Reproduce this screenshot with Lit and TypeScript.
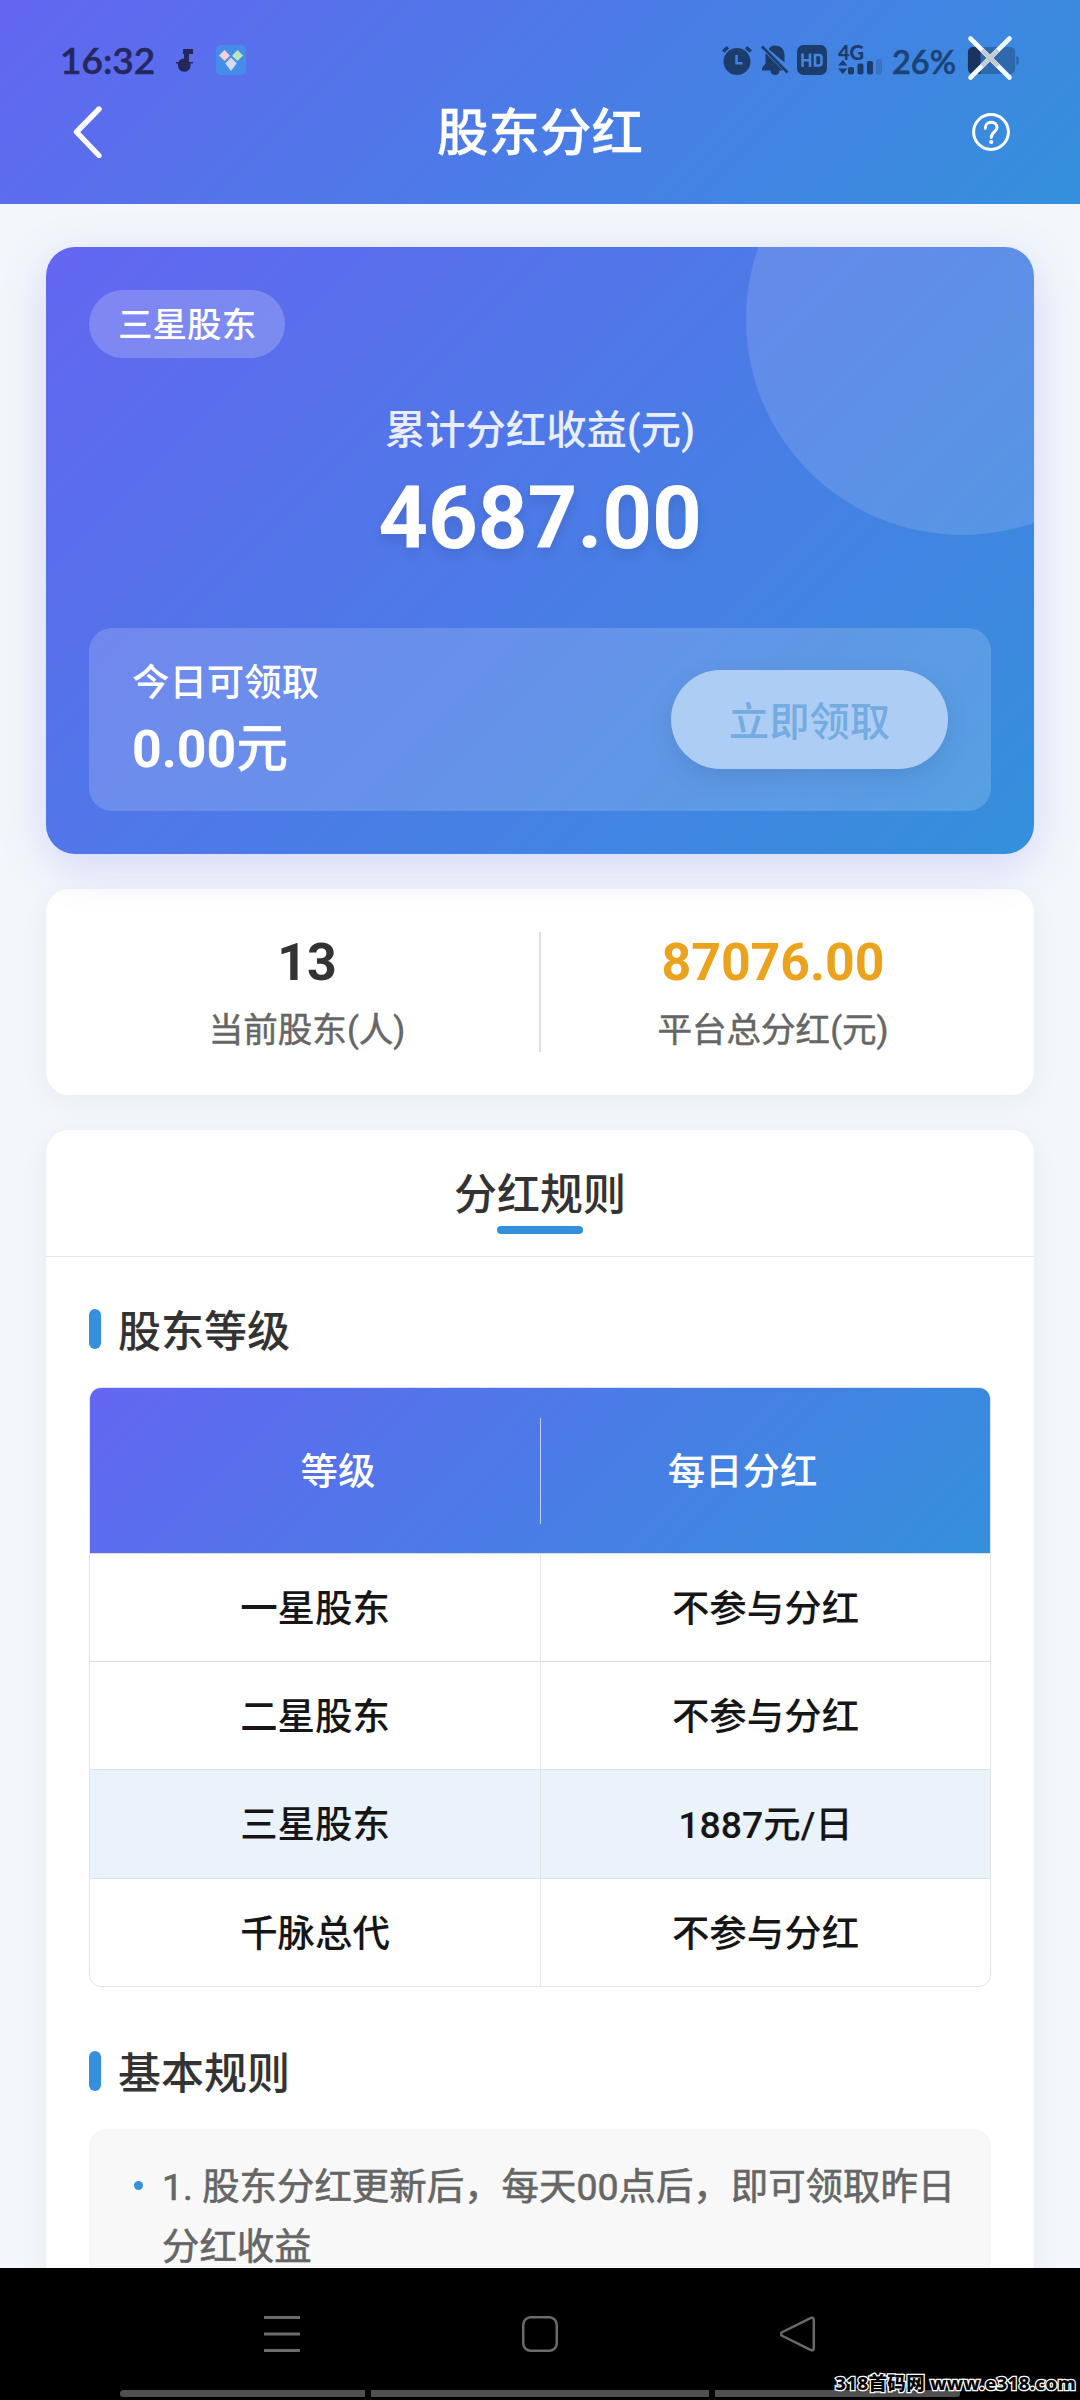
import { LitElement, html, css, svg } from "lit";
import { customElement } from "lit/decorators.js";
import { classMap } from "lit/directives/class-map.js";

const LEVELS = [
  { name: "一星股东", daily: "不参与分红", active: false },
  { name: "二星股东", daily: "不参与分红", active: false },
  { name: "三星股东", daily: "1887元/日", active: true },
  { name: "千脉总代", daily: "不参与分红", active: false },
];

const SIGNAL_BARS = [
  { x: 10, y: 22, h: 7, o: 1 },
  { x: 19.5, y: 18.5, h: 10.5, o: 1 },
  { x: 29, y: 16, h: 13, o: 1 },
  { x: 38, y: 14, h: 15, o: 0.25 },
];

@customElement("status-bar")
class StatusBar extends LitElement {
  static styles = css`
    :host {
      display: flex;
      align-items: center;
      height: 76px;
      padding: 44px 60px 0 60px;
      font-family: Lato, "Noto Sans CJK SC", sans-serif;
      color: #24285f;
    }
    svg {
      display: block;
      flex: none;
      overflow: visible;
    }
    .time {
      width: 116px;
      font-size: 37px;
      line-height: 32px;
      font-weight: 600;
      -webkit-text-stroke: 0.5px #24285f;
      white-space: nowrap;
    }
    .app {
      margin-left: 22px;
    }
    .right {
      display: flex;
      align-items: center;
      margin-left: auto;
      color: #1c3c6c;
    }
    .bell {
      margin-left: 9px;
    }
    .hd {
      margin-left: 8px;
    }
    .network {
      margin-left: 11px;
      width: 45px;
      height: 30px;
      position: relative;
    }
    .gen {
      position: absolute;
      left: 0;
      top: -1px;
      font-size: 20px;
      line-height: 17px;
      font-weight: 900;
    }
    .percent {
      margin: 4px 0 0 9px;
      width: 75px;
      font-size: 32.5px;
      line-height: 34px;
      font-weight: 600;
      -webkit-text-stroke: 0.5px #1c4378;
      color: #1c4378;
    }
    .battery {
      position: relative;
    }
    .close {
      position: absolute;
      left: 1px;
      top: -11px;
    }
  `;

  render() {
    return html`
      <span class="time">16:32</span>
      <svg width="18" height="22" viewBox="0 0 18 22">
        <path d="M7 0H17V5H13V13H17V14.5H14.5A6.5 6.5 0 1 1 2 14.5H0V13H2.4A6.5 6.5 0 0 1 8 9.5V5H7Z" fill="#25265c" />
      </svg>
      <svg class="app" width="30" height="30" viewBox="0 0 30 30">
        <rect width="30" height="30" rx="5" fill="#468de9" />
        <path d="M8.5 5L14 10.8L8.6 16L3 10.6Z" fill="#f5cfd5" />
        <path d="M21.5 5L27 10.6L21.4 16L16 10.8Z" fill="#b8e8b5" />
        <path d="M15 12.5L20.8 18.3L15 26L9.2 18.3Z" fill="#d4daf8" />
      </svg>
      <div class="right">
        <svg width="30" height="30" viewBox="0 0 30 30">
          <circle cx="15" cy="16.5" r="13.5" fill="currentColor" />
          <path d="M1.2 6.5L6 2.3M28.8 6.5L24 2.3" stroke="currentColor" stroke-width="3.4" />
          <path d="M14.5 10V18.3H20.5" fill="none" stroke="#4381e3" stroke-width="2.6" />
        </svg>
        <svg class="bell" width="28" height="30" viewBox="0 0 28 30">
          <path d="M7.5 4.5C9 2 11 .5 14 .5C20 .5 23.5 4.5 23.5 10V17.5L7.5 4Z" fill="currentColor" />
          <path d="M4.5 8L22 25.5H18.5C18.5 28.5 16.5 30 14 30C11.5 30 9.5 28.5 9.5 25.5H1V23L4.5 18.5Z" fill="currentColor" />
          <path d="M1 1.5L26.5 27.5" stroke="currentColor" stroke-width="2.6" />
        </svg>
        <svg class="hd" width="30" height="30" viewBox="0 0 30 30">
          <rect width="30" height="30" rx="6.5" fill="currentColor" />
          <path d="M5.5 8.5V22M13 8.5V22M5.5 15.2H13M18 10H22Q24.5 10 24.5 12.5V18Q24.5 20.5 22 20.5H18Z" fill="none" stroke="#4385df" stroke-width="2.6" />
        </svg>
        <div class="network">
          <span class="gen">4G</span>
          <svg width="45" height="30" viewBox="0 0 45 30">
            <path d="M4.8 15L9.5 20.5H0ZM0 23.5H9.5L4.8 29Z" fill="currentColor" />
            ${SIGNAL_BARS.map(
              (b) => svg`<rect x=${b.x} y=${b.y} width="6" height=${b.h + 0.5} rx="2" fill="currentColor" opacity=${b.o} />`
            )}
          </svg>
        </div>
        <span class="percent">26%</span>
        <div class="battery">
          <svg width="53" height="27" viewBox="0 0 53 28">
            <path d="M6 0H43Q49 0 49 6V22Q49 28 43 28H6Q0 28 0 22V6Q0 0 6 0ZM50 9.5Q53 9.5 53 14Q53 18.5 50 18.5Z" fill="#2f69ad" />
            <path d="M6 0H13V28H6Q0 28 0 22V6Q0 0 6 0Z" fill="#19345e" />
          </svg>
          <svg class="close" width="44" height="44" viewBox="0 0 44 44">
            <path d="M2.5 2.5L41.5 41.5M41.5 2.5L2.5 41.5" stroke="#f4faff" stroke-width="4.6" stroke-linecap="round" />
            <path d="M14 14L30 30M30 14L14 30" stroke="#c6cbd3" stroke-width="4.4" />
          </svg>
        </div>
      </div>
    `;
  }
}

@customElement("app-root")
class AppRoot extends LitElement {
  static styles = css`
    :host {
      display: flex;
      flex-direction: column;
      width: 1080px;
      height: 2400px;
      overflow: hidden;
      position: relative;
      background: #f3f7fb;
      font-family: Roboto, "Noto Sans CJK SC", sans-serif;
      color: #333;
      --brand: linear-gradient(135deg, #6366f1, #3490dc);
      --accent: #3490dc;
    }
    * {
      box-sizing: border-box;
    }
    svg {
      display: block;
    }
    .header {
      flex: none;
      height: 204px;
      background: var(--brand);
    }
    .titlebar {
      display: grid;
      grid-template-columns: 70px 1fr 70px;
      align-items: center;
      height: 112px;
      padding: 0 54px;
      color: #fff;
    }
    .title {
      padding-top: 4px;
      text-align: center;
      font-size: 51.5px;
      line-height: 60px;
      font-weight: 500;
      -webkit-text-stroke: 0.3px #fff;
    }
    .back {
      margin-left: 19px;
    }
    .help {
      margin-left: 16px;
    }
    .content {
      flex: 1;
      min-height: 0;
      overflow: hidden;
      padding: 43px 46px 0;
      display: flex;
      flex-direction: column;
      gap: 35px;
    }
    .hero {
      flex: none;
      height: 607px;
      padding: 43px;
      border-radius: 29px;
      background: var(--brand);
      box-shadow: 0 12px 46px rgba(99, 102, 241, 0.22);
      color: #fff;
      position: relative;
      display: flex;
      flex-direction: column;
    }
    .clip {
      position: absolute;
      inset: 0;
      border-radius: 29px;
      overflow: hidden;
    }
    .orb {
      position: absolute;
      right: -144px;
      top: -144px;
      width: 432px;
      height: 432px;
      border-radius: 50%;
      background: rgba(255, 255, 255, 0.13);
    }
    .badge {
      align-self: flex-start;
      height: 68px;
      padding: 0 29px;
      border-radius: 34px;
      background: rgba(255, 255, 255, 0.2);
      font-size: 34.56px;
      line-height: 71px;
      font-weight: 500;
    }
    .total-label {
      margin-top: 43px;
      text-align: center;
      font-size: 40.32px;
      line-height: 60px;
      font-weight: 500;
      opacity: 0.88;
    }
    .total {
      margin-top: 2px;
      text-align: center;
      font-size: 87px;
      line-height: 110px;
      font-weight: 700;
      letter-spacing: -0.2px;
      text-shadow: 0 6px 12px rgba(0, 0, 0, 0.1);
    }
    .claim {
      margin-top: auto;
      height: 183px;
      padding: 4px 43px 0;
      border-radius: 23px;
      background: rgba(255, 255, 255, 0.16);
      display: flex;
      align-items: center;
      justify-content: space-between;
      position: relative;
    }
    .today {
      font-size: 37.44px;
      line-height: 56px;
      font-weight: 500;
    }
    .amount {
      font-size: 51.84px;
      line-height: 78px;
      font-weight: 700;
    }
    .yuan {
      font-weight: 500;
      -webkit-text-stroke: 0.3px #fff;
    }
    .claim-button {
      width: 277px;
      height: 99px;
      margin-bottom: 4px;
      border: 0;
      padding: 0 0 2px;
      border-radius: 50px;
      background: #aecdf4;
      box-shadow: 0 8px 22px rgba(40, 70, 130, 0.17);
      color: #74abe1;
      font: inherit;
      font-size: 40.32px;
      font-weight: 500;
      text-align: center;
    }
    .stats {
      flex: none;
      height: 206px;
      padding: 43px 29px;
      border-radius: 23px;
      background: #fff;
      box-shadow: 0 6px 29px rgba(40, 40, 90, 0.05);
      display: grid;
      grid-template-columns: 1fr 1fr;
      grid-template-rows: 120px;
      text-align: center;
    }
    .stat:first-child {
      border-right: 1px solid #dedede;
    }
    .stat + .stat {
      border-left: 1px solid #dedede;
    }
    .stat-value {
      padding-top: 1px;
      font-size: 51.84px;
      line-height: 60px;
      font-weight: 700;
    }
    .gold {
      color: #eba31e;
    }
    .stat-label {
      margin-top: 14px;
      font-size: 34.56px;
      line-height: 46px;
      color: #666;
      -webkit-text-stroke: 0.5px #666;
    }
    .rules {
      flex: none;
      border-radius: 23px;
      background: #fff;
      box-shadow: 0 6px 29px rgba(40, 40, 90, 0.05);
      height: 1300px;
    }
    .rules-head {
      height: 127px;
      padding-top: 35px;
      border-bottom: 1px solid #e6e9eb;
      display: flex;
      flex-direction: column;
      align-items: center;
    }
    .rules-title {
      font-size: 43px;
      line-height: 61px;
      font-weight: 500;
    }
    .underline {
      width: 86px;
      height: 8px;
      border-radius: 4px;
      background: var(--accent);
    }
    .rules-body {
      padding: 41px 43px 0;
    }
    .section-title {
      display: flex;
      align-items: center;
      gap: 17px;
      height: 64px;
      font-size: 43px;
      line-height: 66px;
      font-weight: 500;
    }
    .section-title .label {
      padding-top: 4px;
    }
    .mark {
      width: 12px;
      height: 40px;
      border-radius: 6px;
      background: var(--accent);
      margin-bottom: 2px;
    }
    .table {
      margin-top: 25px;
      border: 1px solid #dfe4e8;
      border-radius: 12px;
      overflow: hidden;
      font-size: 37.44px;
      font-weight: 500;
      text-align: center;
      color: #161616;
    }
    .thead {
      display: grid;
      grid-template-columns: 1fr 1fr;
      grid-template-rows: 106px;
      height: 165px;
      padding: 30px 46px 29px;
      background: var(--brand);
      color: #fff;
      line-height: 108px;
    }
    .thead .cell + .cell {
      border-left: 1px solid rgba(255, 255, 255, 0.65);
    }
    .row {
      display: grid;
      grid-template-columns: 1fr 1fr;
      height: 108.2px;
      line-height: 110px;
      border-top: 1px solid #d9dfe2;
    }
    .row .cell + .cell {
      border-left: 1px solid #dfe4e6;
    }
    .active {
      background: #eaf3fb;
    }
    .second {
      margin-top: 53px;
    }
    .list {
      margin-top: 25px;
      padding: 28px 28px 28px 45px;
      border-radius: 17px;
      background: #f8f8f8;
      display: flex;
      align-items: flex-start;
      gap: 19px;
      font-size: 37.44px;
      line-height: 60px;
      color: #666;
      height: 300px;
    }
    .dot {
      flex: none;
      width: 9px;
      height: 9px;
      border-radius: 50%;
      background: var(--accent);
      margin-top: 24px;
    }
    .rule {
      -webkit-text-stroke: 0.6px #666;
    }
    .nav {
      flex: none;
      height: 132px;
      background: #000;
      display: flex;
      flex-direction: column;
    }
    .keys {
      display: flex;
      justify-content: space-between;
      padding: 48px 264px 0;
      height: 122px;
    }
    .tracks {
      display: flex;
      gap: 6px;
      padding-left: 120px;
    }
    .track {
      width: 245px;
      height: 7px;
      background: #505050;
    }
    .track:first-child {
      border-radius: 4px 0 0 4px;
    }
    .track:last-child {
      border-radius: 0 4px 4px 0;
    }
    .wide {
      width: 338px;
    }
    .watermark {
      position: absolute;
      right: 4px;
      bottom: 4px;
      font-family: "Noto Sans", "Noto Sans CJK SC", sans-serif;
      font-size: 18.5px;
      line-height: 26px;
      letter-spacing: 0.35px;
      font-weight: 800;
      color: #000;
      -webkit-text-stroke: 2.6px #fff;
      paint-order: stroke fill;
      white-space: nowrap;
    }
  `;

  render() {
    return html`
      <header class="header">
        <status-bar></status-bar>
        <div class="titlebar">
          <svg class="back" width="29" height="52" viewBox="0 0 29 52">
            <path d="M26 3L3.5 26L26 49.5" fill="none" stroke="#fff" stroke-width="5.4" stroke-linecap="round" stroke-linejoin="round" />
          </svg>
          <div class="title">股东分红</div>
          <svg class="help" width="38" height="38" viewBox="0 0 38 38" fill="none" stroke="#fff" stroke-width="3">
            <circle cx="19" cy="19" r="17.4" />
            <path d="M13.3 15.2C13.3 11.4 16 9.3 19.4 9.3C22.8 9.3 25 11.5 25 14.6C25 19 19.2 19 19.2 24.6" stroke-linecap="round" />
            <circle cx="19.2" cy="29" r="2.1" fill="#fff" stroke="none" />
          </svg>
        </div>
      </header>

      <main class="content">
        <section class="hero">
          <div class="clip"><div class="orb"></div></div>
          <div class="badge">三星股东</div>
          <div class="total-label">累计分红收益(元)</div>
          <div class="total">4687.00</div>
          <div class="claim">
            <div>
              <div class="today">今日可领取</div>
              <div class="amount">0.00<span class="yuan">元</span></div>
            </div>
            <button class="claim-button">立即领取</button>
          </div>
        </section>

        <section class="stats">
          <div class="stat">
            <div class="stat-value">13</div>
            <div class="stat-label">当前股东(人)</div>
          </div>
          <div class="stat">
            <div class="stat-value gold">87076.00</div>
            <div class="stat-label">平台总分红(元)</div>
          </div>
        </section>

        <section class="rules">
          <div class="rules-head">
            <div class="rules-title">分红规则</div>
            <div class="underline"></div>
          </div>
          <div class="rules-body">
            <div class="section-title"><span class="mark"></span><span class="label">股东等级</span></div>
            <div class="table">
              <div class="thead">
                <div class="cell">等级</div>
                <div class="cell">每日分红</div>
              </div>
              ${LEVELS.map(
                (l) => html`
                  <div class=${classMap({ row: true, active: l.active })}>
                    <div class="cell">${l.name}</div>
                    <div class="cell">${l.daily}</div>
                  </div>
                `
              )}
            </div>
            <div class="section-title second"><span class="mark"></span><span class="label">基本规则</span></div>
            <div class="list">
              <span class="dot"></span>
              <div class="rule">1. 股东分红更新后，每天00点后，即可领取昨日分红收益</div>
            </div>
          </div>
        </section>
      </main>

      <nav class="nav">
        <div class="keys">
          <svg width="36" height="36" viewBox="0 0 36 36">
            <path d="M0 1.5H36M0 18H36M0 34.5H36" stroke="#6b6b6b" stroke-width="3" />
          </svg>
          <svg width="36" height="36" viewBox="0 0 36 36">
            <rect x="1.25" y="1.25" width="33.5" height="33.5" rx="7.5" fill="none" stroke="#6b6b6b" stroke-width="2.5" />
          </svg>
          <svg width="36" height="36" viewBox="0 0 36 36">
            <path d="M30.5 2.2Q33.8 .8 33.8 4V32Q33.8 35.2 30.5 33.8L2.5 20Q-.5 18 2.5 16Z" fill="none" stroke="#6b6b6b" stroke-width="2.5" stroke-linejoin="round" />
          </svg>
        </div>
        <div class="tracks">
          <div class="track"></div>
          <div class="track wide"></div>
          <div class="track"></div>
        </div>
      </nav>
      <div class="watermark">318首码网 www.e318.com</div>
    `;
  }
}
